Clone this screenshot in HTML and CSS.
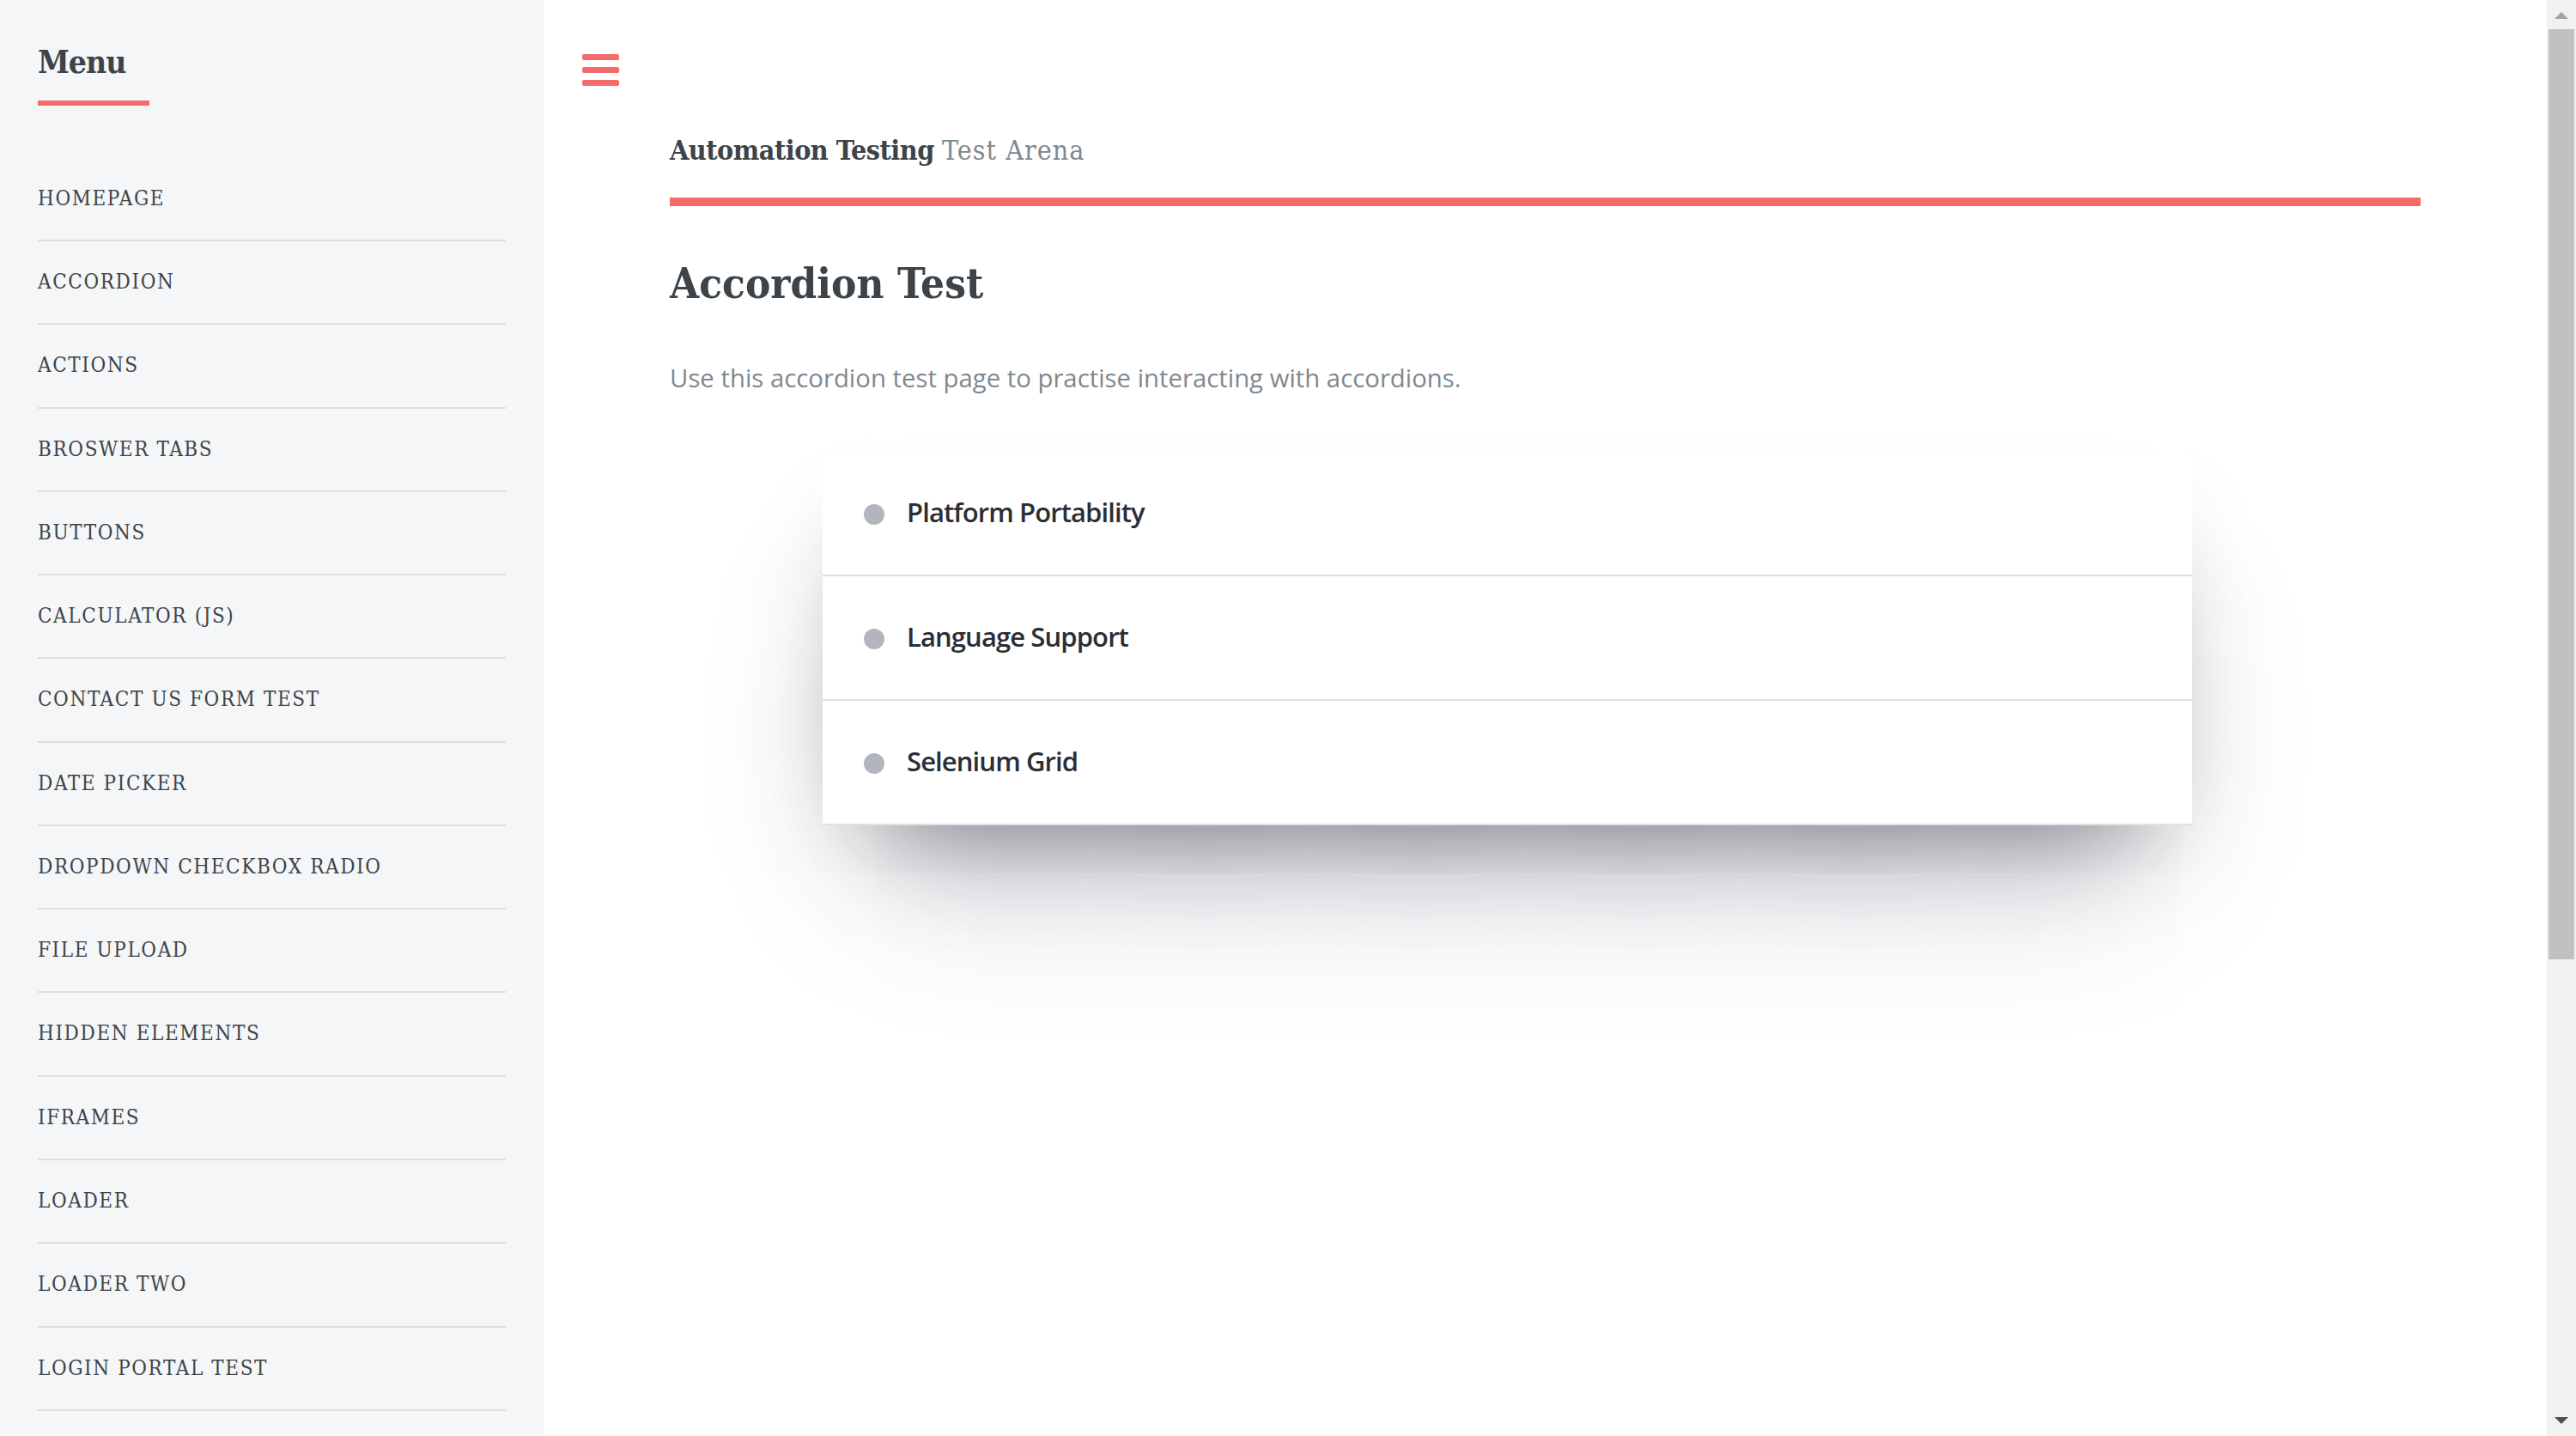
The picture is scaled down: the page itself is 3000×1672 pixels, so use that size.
FILE: index.html
```html
<!DOCTYPE html>
<html lang="en">
<head>
<meta charset="utf-8">
<title>Accordion Test | Automation Testing Test Arena</title>
<link rel="stylesheet" href="styles.css">
</head>
<body>
<div class="viewport">
  <div class="page">
    <aside class="sidebar">
      <nav class="menu">
        <header class="menu-header"><h2 class="menu-title">Menu</h2></header>
        <ul class="menu-list">
          <li class="menu-item"><a class="menu-link" href="#">Homepage</a></li>
          <li class="menu-item"><a class="menu-link" href="#">Accordion</a></li>
          <li class="menu-item"><a class="menu-link" href="#">Actions</a></li>
          <li class="menu-item"><a class="menu-link" href="#">Broswer Tabs</a></li>
          <li class="menu-item"><a class="menu-link" href="#">Buttons</a></li>
          <li class="menu-item"><a class="menu-link" href="#">Calculator (JS)</a></li>
          <li class="menu-item"><a class="menu-link" href="#">Contact Us Form Test</a></li>
          <li class="menu-item"><a class="menu-link" href="#">Date Picker</a></li>
          <li class="menu-item"><a class="menu-link" href="#">Dropdown Checkbox Radio</a></li>
          <li class="menu-item"><a class="menu-link" href="#">File Upload</a></li>
          <li class="menu-item"><a class="menu-link" href="#">Hidden Elements</a></li>
          <li class="menu-item"><a class="menu-link" href="#">iFrames</a></li>
          <li class="menu-item"><a class="menu-link" href="#">Loader</a></li>
          <li class="menu-item"><a class="menu-link" href="#">Loader Two</a></li>
          <li class="menu-item"><a class="menu-link" href="#">Login Portal Test</a></li>
        </ul>
      </nav>
    </aside>
    <main class="main">
      <div class="toggle-row">
        <a class="toggle" href="#" aria-label="Toggle menu">
          <svg class="toggle-icon" width="43" height="37" viewBox="0 0 43 37">
            <rect x="0" y="0" width="43" height="7" rx="2"/>
            <rect x="0" y="15" width="43" height="7" rx="2"/>
            <rect x="0" y="30" width="43" height="7" rx="2"/>
          </svg>
        </a>
      </div>
      <div class="inner">
        <header class="site-header">
          <a class="logo" href="#"><strong class="logo-main">Automation Testing</strong> <span class="logo-sub">Test Arena</span></a>
        </header>
        <section class="content">
          <h1 class="page-title">Accordion Test</h1>
          <p class="lead">Use this accordion test page to practise interacting with accordions.</p>
          <div class="accordion">
            <div class="acc-item"><span class="acc-dot"></span><span class="acc-label">Platform Portability</span></div>
            <div class="acc-item"><span class="acc-dot"></span><span class="acc-label">Language Support</span></div>
            <div class="acc-item"><span class="acc-dot"></span><span class="acc-label">Selenium Grid</span></div>
          </div>
        </section>
      </div>
    </main>
  </div>
  <div class="scrollbar" aria-hidden="true">
    <div class="sb-btn">
      <svg class="sb-arrow sb-arrow-up" width="16" height="8" viewBox="0 0 16 8"><polygon points="0,8 8,0 16,8"/></svg>
    </div>
    <div class="sb-track"><div class="sb-thumb"></div></div>
    <div class="sb-btn">
      <svg class="sb-arrow sb-arrow-down" width="16" height="8" viewBox="0 0 16 8"><polygon points="0,0 16,0 8,8"/></svg>
    </div>
  </div>
</div>
</body>
</html>
```
FILE: styles.css
```css
html, body {
  margin: 0;
  padding: 0;
}
body {
  background: #ffffff;
  color: #7f888f;
  font-family: "Open Sans", "Noto Sans", sans-serif;
  overflow: hidden;
}

.viewport {
  display: flex;
  height: 100vh;
}
.page {
  flex: 1 1 auto;
  min-width: 0;
  display: flex;
  overflow: hidden;
}

/* Fake browser scrollbar */
.scrollbar {
  flex: 0 0 34px;
  display: flex;
  flex-direction: column;
  background: #f1f1f1;
}
.sb-btn {
  flex: 0 0 34px;
  display: flex;
  justify-content: center;
}
.sb-arrow {
  display: block;
}
.sb-arrow-up {
  margin-top: 14px;
  fill: #a3a3a3;
}
.sb-arrow-down {
  margin-top: 12px;
  fill: #505050;
}
.sb-track {
  flex: 1 1 auto;
  padding: 0 2px;
}
.sb-thumb {
  height: 1083px;
  background: #c1c1c1;
}

/* Sidebar */
.sidebar {
  flex: 0 0 633px;
  box-sizing: border-box;
  background: #f5f6f7;
  padding: 44px 44px;
}
.menu-header {
  display: flex;
}
.menu-title {
  margin: 0 0 74px;
  padding: 0 28px 15.4px 0;
  border-bottom: 6px solid #f56a6a;
  font-family: "DejaVu Serif Condensed", "DejaVu Serif", serif;
  font-stretch: condensed;
  font-weight: 700;
  font-size: 37px;
  line-height: 57.6px;
  letter-spacing: -1px;
  color: #3d4449;
}
.menu-list {
  list-style: none;
  margin: 0;
  padding: 0;
}
.menu-item {
  border-top: 2px solid rgba(210, 215, 217, 0.75);
  margin-top: 13.2px;
  padding-top: 13.2px;
}
.menu-item:first-child {
  border-top: 0;
  margin-top: 0;
  padding-top: 0;
}
.menu-item:last-child {
  border-bottom: 2px solid rgba(210, 215, 217, 0.75);
  padding-bottom: 13.2px;
}
.menu-link {
  display: block;
  padding: 14.85px 0;
  font-family: "DejaVu Serif Condensed", "DejaVu Serif", serif;
  font-stretch: condensed;
  font-size: 24px;
  line-height: 39.2px;
  letter-spacing: 1.6px;
  text-transform: uppercase;
  color: #3d4449;
  text-decoration: none;
}

/* Main */
.main {
  flex: 1 1 auto;
  min-width: 0;
}
.toggle-row {
  padding: 63px 0 0 45px;
  height: 37px;
}
.toggle {
  display: block;
  width: 43px;
  height: 37px;
}
.toggle-icon {
  display: block;
  fill: #f56a6a;
}
.inner {
  padding: 0 147px;
}
.site-header {
  border-bottom: 10px solid #f56a6a;
  padding: 48.3px 0 27.2px;
  font-family: "DejaVu Serif Condensed", "DejaVu Serif", serif;
  font-stretch: condensed;
  font-size: 32px;
  line-height: 54.5px;
}
.logo {
  color: #7f888f;
  text-decoration: none;
}
.logo-main {
  color: #3d4449;
  font-weight: 700;
  letter-spacing: -0.5px;
}
.logo-sub {
  font-weight: 400;
  letter-spacing: 1px;
}

.page-title {
  margin: 53px 0 0;
  font-family: "DejaVu Serif Condensed", "DejaVu Serif", serif;
  font-stretch: condensed;
  font-weight: 700;
  font-size: 49px;
  line-height: 74px;
  color: #3d4449;
}
.lead {
  margin: 49px 0 0;
  font-size: 29.33px;
  line-height: 48.4px;
  color: #7f888f;
}

.accordion {
  margin: 62px 0 0 178px;
  width: 1595px;
  background: #ffffff;
  box-shadow: 0 110px 200px -70px rgba(50, 50, 93, 0.32),
    0 60px 120px -60px rgba(0, 0, 0, 0.5);
}
.acc-item {
  display: flex;
  align-items: center;
  height: 143px;
  padding-left: 48px;
  border-bottom: 2px solid #dfe1e7;
}
.acc-dot {
  flex: none;
  width: 24px;
  height: 24px;
  margin: 2px 26px 0 0;
  border-radius: 50%;
  background: #b2b5be;
}
.acc-label {
  padding-bottom: 4px;
  font-family: "Open Sans", "Noto Sans", sans-serif;
  font-weight: 600;
  font-size: 31px;
  letter-spacing: -0.9px;
  color: #2b2e35;
}
```
